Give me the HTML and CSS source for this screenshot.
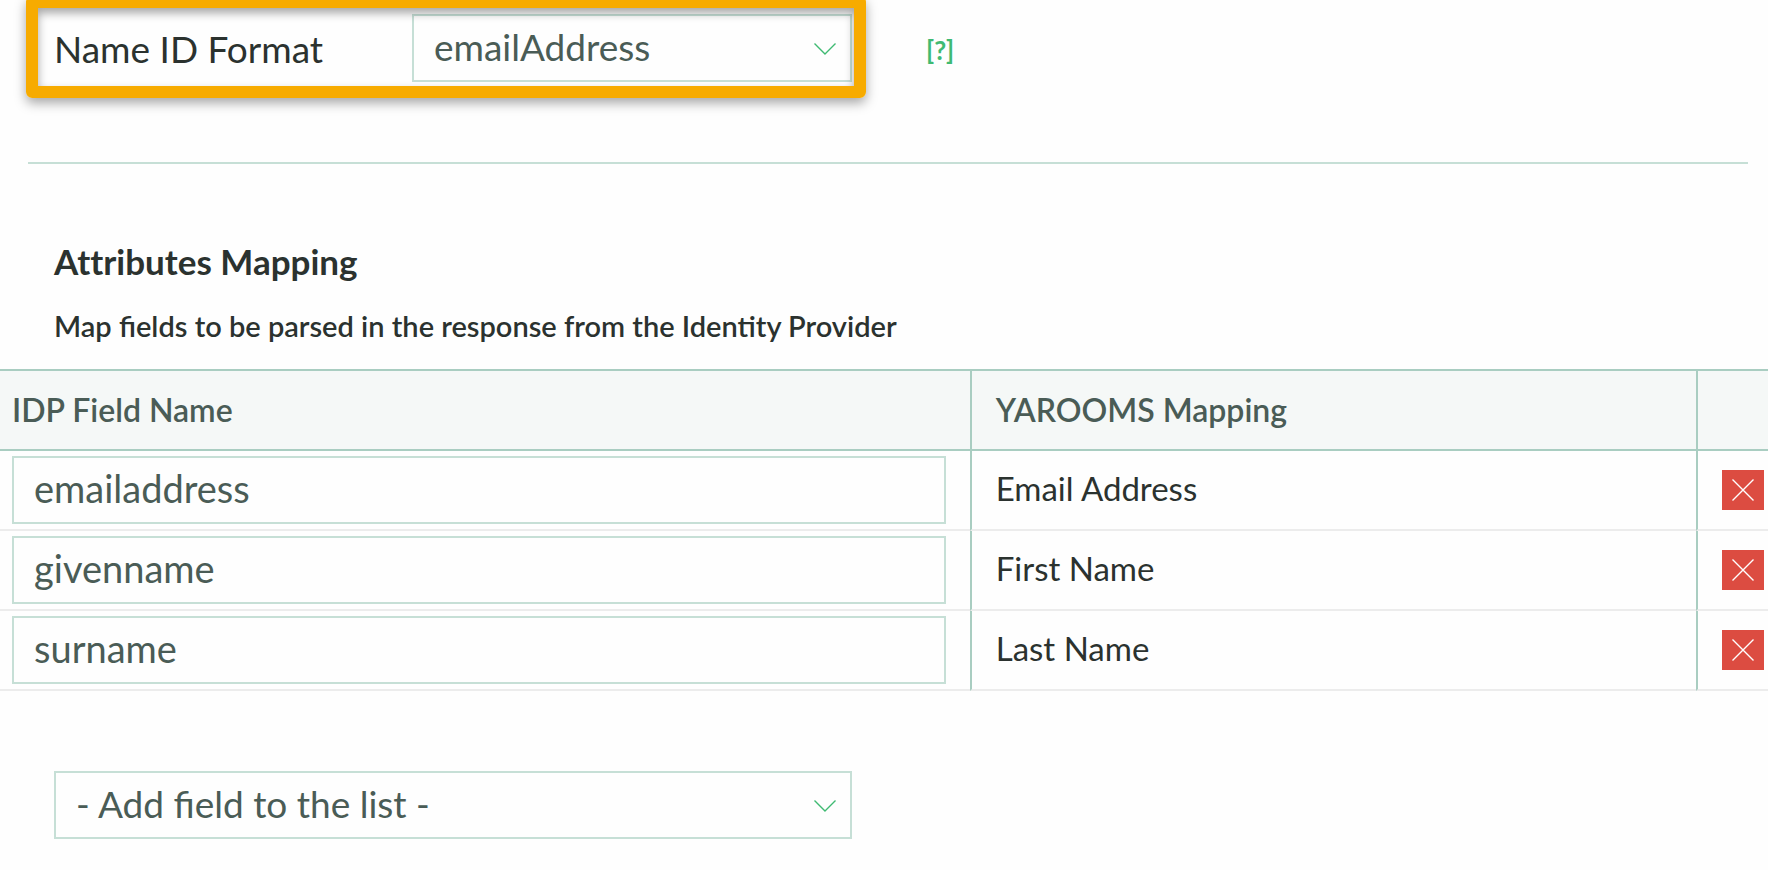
FILE: index.html
```
<!DOCTYPE html>
<html lang="en">
  <head>
    <meta charset="UTF-8" />
    <meta name="viewport" content="width=device-width, initial-scale=1.0" />
    <title>SAML Attributes Mapping</title>
    <link rel="stylesheet" href="styles.css" />
  </head>
  <body>
    <form action="" method="post">
      <section class="format">
        <div class="format-field">
          <label for="nameFormat">Name ID Format</label>
          <div class="select">
            <select name="nameFormat" id="nameFormat">
              <option>emailAddress</option>
              <option>persistent</option>
              <option>transient</option>
              <option>unspecified</option>
            </select>
            <svg class="arrow" viewBox="0 0 22 12" aria-hidden="true">
              <path d="M0.5 0.5 L11 11 L21.5 0.5" />
            </svg>
          </div>
        </div>
        <a class="help" href="#help">[?]</a>
      </section>

      <section class="mapping">
        <h2>Attributes Mapping</h2>
        <p>Map fields to be parsed in the response from the Identity Provider</p>
        <table>
          <colgroup>
            <col class="col-idp" />
            <col />
            <col class="col-remove" />
          </colgroup>
          <thead>
            <tr>
              <th>IDP Field Name</th>
              <th>YAROOMS Mapping</th>
              <th></th>
            </tr>
          </thead>
          <tbody>
            <tr>
              <td><input type="text" name="email" id="email" aria-labelledby="emailLabel" value="emailaddress" /></td>
              <td><label for="email" id="emailLabel">Email Address</label></td>
              <td>
                <button type="button" class="remove" aria-label="Remove Email Address">
                  <svg viewBox="0 0 22 22"><path d="M0.5 0.5 L21.5 21.5 M21.5 0.5 L0.5 21.5" /></svg>
                </button>
              </td>
            </tr>
            <tr>
              <td><input type="text" name="first" id="first" aria-labelledby="firstLabel" value="givenname" /></td>
              <td><label for="first" id="firstLabel">First Name</label></td>
              <td>
                <button type="button" class="remove" aria-label="Remove First Name">
                  <svg viewBox="0 0 22 22"><path d="M0.5 0.5 L21.5 21.5 M21.5 0.5 L0.5 21.5" /></svg>
                </button>
              </td>
            </tr>
            <tr>
              <td><input type="text" name="last" id="last" aria-labelledby="lastLabel" value="surname" /></td>
              <td><label for="last" id="lastLabel">Last Name</label></td>
              <td>
                <button type="button" class="remove" aria-label="Remove Last Name">
                  <svg viewBox="0 0 22 22"><path d="M0.5 0.5 L21.5 21.5 M21.5 0.5 L0.5 21.5" /></svg>
                </button>
              </td>
            </tr>
          </tbody>
        </table>
      </section>

      <div class="select add-field">
        <select name="addField" id="addField" aria-label="Add field to the list">
          <option>- Add field to the list -</option>
          <option>Phone</option>
          <option>Location</option>
        </select>
        <svg class="arrow" viewBox="0 0 22 12" aria-hidden="true">
          <path d="M0.5 0.5 L11 11 L21.5 0.5" />
        </svg>
      </div>
    </form>
  </body>
</html>
```
FILE: styles.css
```
* {
  box-sizing: border-box;
}
body {
  margin: 0;
  background-color: #fefefe;
  color: #2b322f;
  font-family: Lato, "Open Sans", sans-serif;
  font-size: 33px;
}

/* name id format */
.format {
  display: flex;
  align-items: center;
  gap: 74px;
  margin: 0 20px 0 28px;
  padding: 14px 0 80px 26px;
  border-bottom: 2px solid #c6dfd6;
}
.format-field {
  position: relative;
  display: flex;
  align-items: center;
  width: 798px;
}
.format-field label {
  width: 358px;
  font-size: 37px;
}
/* orange marker round the field */
.format-field::after {
  content: "";
  position: absolute;
  inset: -18px -14px -16px -28px;
  border: 12px solid #f7ab00;
  border-radius: 6px;
  box-shadow: 0 5px 12px rgba(0, 0, 0, 0.35),
    inset 0 5px 10px rgba(0, 0, 0, 0.35);
  pointer-events: none;
}
.help {
  color: #3fba72;
  font-size: 26px;
  font-weight: bold;
  text-decoration: none;
  padding-top: 4px;
}

/* inputs */
select,
input {
  display: block;
  width: 100%;
  height: 68px;
  padding: 0 20px 4px;
  border: 2px solid #c6dfd6;
  border-radius: 0;
  background-color: transparent;
  color: #4a5c56;
  font-family: inherit;
  font-size: 37px;
  appearance: none;
}
input {
  font-size: 38px;
}
.select {
  position: relative;
  flex: 1;
}
.arrow {
  position: absolute;
  right: 16px;
  top: 29px;
  width: 22px;
  height: 12px;
  fill: none;
  stroke: #3fba72;
  stroke-width: 1.4;
  pointer-events: none;
}

/* mapping */
h2 {
  margin: 76px 54px 0;
  font-size: 35px;
  line-height: 42px;
  font-variant-ligatures: none;
}
.mapping p {
  margin: 26px 54px 25px;
  font-size: 29px;
  font-weight: 600;
  line-height: 36px;
}
table {
  width: 100%;
  table-layout: fixed;
  border-collapse: separate;
  border-spacing: 0;
}
.col-idp {
  width: 54.85%;
}
.col-remove {
  width: 72px;
}
th {
  height: 82px;
  padding: 0 24px 2px;
  border-top: 2px solid #a9cdc1;
  border-bottom: 2px solid #a9cdc1;
  background-color: #f5f8f7;
  color: #4a5c56;
  font-size: 32px;
  font-weight: 600;
  text-align: left;
}
td {
  height: 80px;
  padding: 4px 24px 4px;
  border-bottom: 2px solid #ececec;
}
td label {
  display: block;
  padding-bottom: 4px;
}
th + th,
td + td {
  border-left: 2px solid #a9cdc1;
}
th:first-child,
td:first-child {
  padding-left: 12px;
}
td:last-child {
  padding-right: 4px;
}
.remove {
  display: flex;
  align-items: center;
  justify-content: center;
  width: 42px;
  height: 40px;
  padding: 0;
  border: none;
  background-color: #dc4c41;
}
.remove svg {
  width: 22px;
  height: 22px;
  stroke: #fff;
  stroke-width: 1.4;
}

.add-field {
  width: 798px;
  margin: 80px 54px 32px;
}
```
